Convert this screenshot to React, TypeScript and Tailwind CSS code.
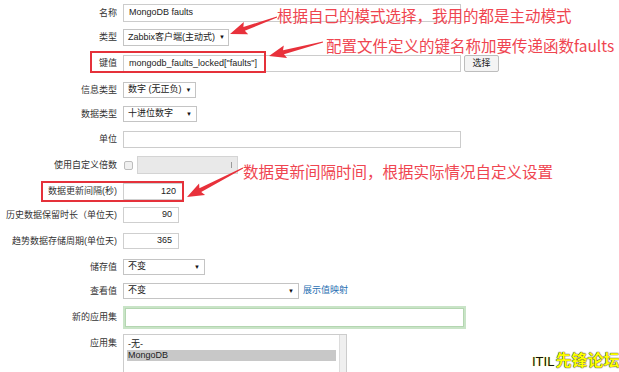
import type { ReactNode } from 'react'

// Arrow shape: thin tail widening to a barbed head
const arrowPoints = (tx: number, ty: number, hx: number, hy: number) => {
  const len = Math.hypot(hx - tx, hy - ty)
  const dx = (hx - tx) / len
  const dy = (hy - ty) / len
  const nx = -dy
  const ny = dx
  const headLen = 15
  const bx = hx - dx * headLen
  const by = hy - dy * headLen
  const pts: [number, number][] = [
    [tx + nx * 0.4, ty + ny * 0.4],
    [bx + nx * 2, by + ny * 2],
    [bx - dx * 2 + nx * 6.5, by - dy * 2 + ny * 6.5],
    [hx, hy],
    [bx - dx * 2 - nx * 6.5, by - dy * 2 - ny * 6.5],
    [bx - nx * 2, by - ny * 2],
    [tx - nx * 0.4, ty - ny * 0.4],
  ]
  return pts.map(([x, y]) => `${x.toFixed(1)},${y.toFixed(1)}`).join(' ')
}

function Row({
  label,
  className,
  labelClassName = '',
  children,
}: {
  label: string
  className: string
  labelClassName?: string
  children: ReactNode
}) {
  return (
    <div className={`flex ${className}`}>
      <div
        className={`w-[117px] shrink-0 text-right text-[9px] leading-none text-[#333] whitespace-nowrap ${labelClassName}`}
      >
        {label}
      </div>
      <div className="ml-[6px] flex items-center">{children}</div>
    </div>
  )
}

function Select({ value, className }: { value: string; className: string }) {
  return (
    <div
      className={`flex items-center justify-between border border-[#c4c4c4] bg-white pl-[4px] pr-[4px] text-[9px] text-[#222] ${className}`}
    >
      <span className="whitespace-nowrap">{value}</span>
      <span className="ml-[4px] text-[6px] text-[#111]">▼</span>
    </div>
  )
}

function NumInput({ value, className }: { value: string; className: string }) {
  return (
    <div
      className={`flex items-center justify-end border border-[#cfcfcf] bg-white pr-[6px] text-[9px] text-[#222] ${className}`}
    >
      {value}
    </div>
  )
}

export default function App() {
  return (
    <div className="relative w-[619px] h-[372px] overflow-hidden bg-white font-['Liberation_Sans','Noto_Sans_CJK_SC',sans-serif]">
      <div className="flex flex-col pt-[4px]">
        <Row label="名称" className="items-center">
          <div className="flex h-[18px] w-[338px] items-center border border-[#cccccc] pl-[5px] text-[9px] text-[#222]">
            MongoDB faults
          </div>
        </Row>

        <Row label="类型" className="mt-[7px] items-center">
          <Select value="Zabbix客户端(主动式)" className="h-[17px] w-[106px]" />
        </Row>

        <Row label="键值" className="mt-[9px] items-center">
          <div className="flex h-[17px] w-[338px] items-center border border-[#cccccc] pl-[5px] text-[9px] text-[#222]">
            mongodb_faults_locked["faults"]
          </div>
          <div className="ml-[3px] flex h-[17px] w-[35px] items-center justify-center rounded-[2px] border border-[#bdbdbd] bg-[#f4f4f4] text-[9px] text-[#222]">
            选择
          </div>
        </Row>

        <Row label="信息类型" className="mt-[10px] items-center">
          <Select value="数字 (无正负)" className="h-[16px] w-[73px]" />
        </Row>

        <Row label="数据类型" className="mt-[8px] items-center">
          <Select value="十进位数字" className="h-[16px] w-[74px]" />
        </Row>

        <Row label="单位" className="mt-[9px] items-center">
          <div className="h-[17px] w-[338px] border border-[#cccccc]" />
        </Row>

        <Row label="使用自定义倍数" className="mt-[8px] items-center">
          <div className="ml-[1px] h-[9px] w-[9px] rounded-[2px] border border-[#bdbdbd] bg-[#f0f0f0]" />
          <div className="ml-[4px] flex h-[18px] w-[101px] items-center justify-end border border-[#d4d4d4] bg-[#e9e9e9] pr-[5px]">
            <span className="h-[6px] w-px bg-[#9a9a9a]" />
          </div>
        </Row>

        <Row label="数据更新间隔(秒)" className="mt-[9px] items-center">
          <NumInput value="120" className="h-[17px] w-[60px]" />
        </Row>

        <Row label="历史数据保留时长（单位天)" className="mt-[7px] items-center">
          <NumInput value="90" className="h-[16px] w-[56px]" />
        </Row>

        <Row label="趋势数据存储周期(单位天)" className="mt-[10px] items-center">
          <NumInput value="365" className="h-[16px] w-[56px]" />
        </Row>

        <Row label="储存值" className="mt-[10px] items-center">
          <Select value="不变" className="h-[16px] w-[82px]" />
        </Row>

        <Row label="查看值" className="mt-[8px] items-center">
          <Select value="不变" className="h-[16px] w-[176px]" />
          <span className="ml-[4px] text-[9px] text-[#1f6fb2]">展示值映射</span>
        </Row>

        <Row label="新的应用集" className="mt-[7px] items-center">
          <div className="h-[23px] w-[343px] border-2 border-[#c9e4c7] bg-white shadow-[inset_0_0_0_1px_#b4d6b1]" />
        </Row>

        <Row label="应用集" className="mt-[5px] items-start" labelClassName="pt-[5px]">
          <div className="flex h-[50px] w-[224px] border border-[#cccccc]">
            <div className="flex flex-1 flex-col pl-[3px] pr-[3px] pt-[4px] text-[9px] leading-[11px] text-[#222]">
              <span className="pl-[1px]">-无-</span>
              <span className="bg-[#c8c8c8] pl-[1px]">MongoDB</span>
            </div>
            <div className="w-[7px] border-l border-[#dcdcdc] bg-[#efefef]" />
          </div>
        </Row>
      </div>

      {/* red highlight boxes */}
      <div className="absolute left-[90px] top-[51px] h-[22px] w-[176px] border-2 border-[#e5313a]" />
      <div className="absolute left-[41px] top-[181px] h-[21px] w-[143px] border-2 border-[#e5313a]" />

      {/* annotations */}
      <div className="absolute left-[277px] top-[8px] text-[15.5px] leading-none text-[#ef4550] font-['Noto_Sans_CJK_SC',sans-serif] whitespace-nowrap">
        根据自己的模式选择，我用的都是主动模式
      </div>
      <div className="absolute left-[326px] top-[38px] text-[15.5px] leading-none text-[#ef4550] font-['Noto_Sans_CJK_SC',sans-serif] whitespace-nowrap">
        配置文件定义的键名称加要传递函数faults
      </div>
      <div className="absolute left-[243px] top-[164px] text-[15.5px] leading-none text-[#ef4550] font-['Noto_Sans_CJK_SC',sans-serif] whitespace-nowrap">
        数据更新间隔时间，根据实际情况自定义设置
      </div>

      <svg className="pointer-events-none absolute left-0 top-0" width="619" height="372">
        <polygon points={arrowPoints(277, 17, 230, 34)} fill="#e8313b" />
        <polygon points={arrowPoints(323, 42, 269, 56)} fill="#e8313b" />
        <polygon points={arrowPoints(243, 168, 187, 197)} fill="#e8313b" />
      </svg>

      {/* watermark */}
      <div className="absolute left-[532px] top-[351px] flex items-baseline leading-none whitespace-nowrap font-['Noto_Sans_CJK_SC',sans-serif]">
        <span className="text-[13px] font-['Liberation_Sans',sans-serif] text-[#111] [text-shadow:0_0_1px_#ffff00]">
          ITIL
        </span>
        <span className="ml-[1px] text-[16px] font-bold text-[#ffff00] [text-shadow:0_0_1px_#222,0_0_1px_#222]">
          先锋论坛
        </span>
      </div>
    </div>
  )
}
